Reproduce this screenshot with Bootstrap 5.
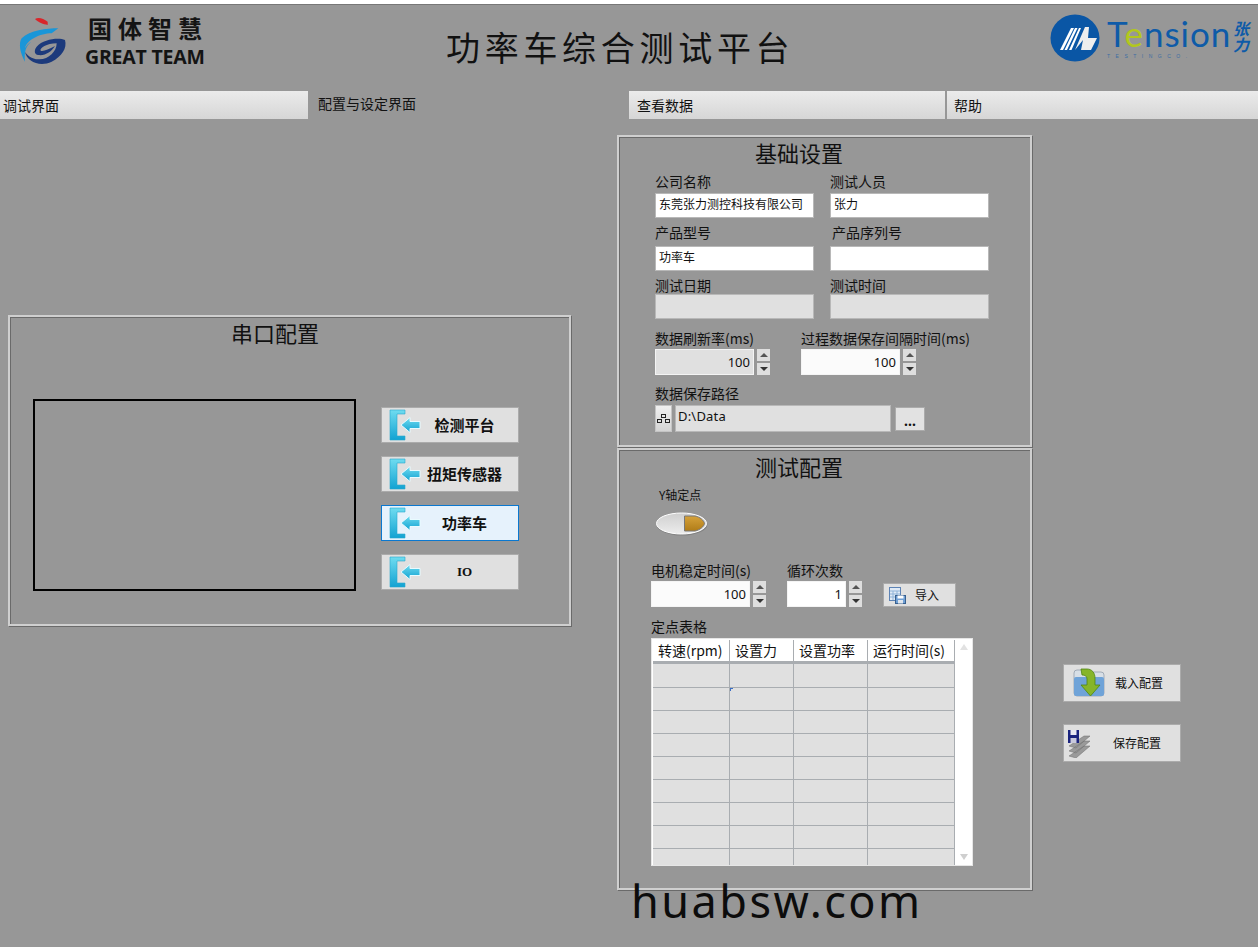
<!DOCTYPE html>
<html lang="zh"><head><meta charset="utf-8"><title>功率车综合测试平台</title>
<link href="https://cdn.jsdelivr.net/npm/bootstrap@5.3.0/dist/css/bootstrap.min.css" rel="stylesheet">
<style>
html,body{margin:0;height:947px;overflow:hidden}
body{background:#979797;color:#111;font-family:"Noto Sans","Noto Sans CJK SC",sans-serif;font-size:14px;position:relative}
.top-strip{height:5px;background:#fff;border-bottom:1px solid #777}
.head-bar{height:86px;position:relative}
.g-logo{margin:5px 5px 0 10px;flex:none}
.g-text{padding-top:10px;flex:none;width:380px}
.g-cn{font-size:24px;font-weight:700;letter-spacing:6px;line-height:26px;height:28px;padding-top:2px;margin-left:3px;color:#141414;font-family:"Liberation Sans","Noto Sans CJK SC",sans-serif}
.g-en{font-size:19.5px;font-weight:700;line-height:28px;color:#141414;font-family:"Open Sans",sans-serif;letter-spacing:-.2px}
.app-title{font-family:"Noto Sans CJK SC",serif;font-size:34px;font-weight:400;letter-spacing:4.7px;line-height:40px;margin:22px 0 0 -19px;flex:none;width:400px;white-space:nowrap}
.t-logo{margin:9px 0 0 204px;flex:none}
.t-word{position:relative;margin-left:6px;width:125px;flex:none}
.t-name{font-family:"Lato",sans-serif;font-size:35px;line-height:40px;color:#0e5ba8;letter-spacing:1px;margin-top:8px;white-space:nowrap}
.t-name span{color:#b2c71d}
.t-sub{font-size:5px;line-height:6px;color:#3d6ea3;letter-spacing:5.5px;white-space:nowrap;font-family:"Liberation Sans",sans-serif}
.t-cn{writing-mode:vertical-rl;font-family:"Noto Sans CJK SC",sans-serif;font-weight:700;font-style:italic;font-size:16px;line-height:18px;color:#0e5ba8;margin-top:16px;flex:none}
.tab-row{height:28px}
.tab-item{background:linear-gradient(#ebebeb,#d6d6d6);line-height:28px;flex:none;white-space:nowrap;padding-top:1px}
.tab-a{width:308px;padding-left:3px}
.tab-b{width:321px;padding-left:10px;background:none;line-height:26px;padding-top:0}
.tab-c{width:316px;padding-left:8px}
.tab-d{flex:1 1 auto;margin-left:2px;padding-left:7px}
.main-grid{display:grid;grid-template-columns:617px 415px 1fr}
.col-left{padding:197px 0 0 8px}
.col-mid{padding-top:16px}
.col-right{padding:545px 0 0 31px}
.frame-box{border:2px solid #cfcfcf;box-shadow:inset 1px 1px 0 #6a6a6a,1px 1px 0 #6a6a6a}
.frame-com{width:563px;height:311px;margin-top:-1px}
.frame-a{height:312px}
.frame-b{height:442px;margin-top:1px}
.frame-title{font-family:"Noto Sans CJK SC",sans-serif;font-size:22px;line-height:30px;height:37px;white-space:nowrap}
.frame-b .frame-title{line-height:33px}
.frame-a .frame-title,.frame-b .frame-title{padding-left:136px}
.frame-com .frame-title{padding-left:221px}
.com-body{padding:45px 0 0 23px;gap:25px}
.com-canvas{width:323px;height:192px;border:2px solid #000;flex:none}
.com-btns{margin-top:8px;gap:13px;width:138px}
.lv-btn{--bs-btn-padding-x:0;--bs-btn-padding-y:0;--bs-btn-border-radius:0;--bs-btn-border-width:1px;background:#e0e0e0;border-color:#ababab;color:#111;display:flex;align-items:center;position:relative;font-family:"Noto Sans CJK SC",sans-serif;white-space:nowrap}
.com-btn{width:138px;height:36px;font-weight:700;font-size:15px;padding-left:7px}
.com-btn span{flex:1;text-align:center;padding-right:10px}
.com-on{background:#e6f2fc;border-color:#0a78d0}
.ser-txt{font-family:"Liberation Serif",serif;font-size:13px}
.a-body{padding-left:36px}
.label-line{line-height:15px;height:19px;white-space:nowrap;font-family:"Noto Sans CJK SC","Noto Sans",sans-serif}
.lbl-r2{line-height:11px}
.lbl-r3{line-height:21px}
.lbl-r4{line-height:17px}
.lbl-r5{line-height:15px}
.lbl-b{line-height:17px}
.pair{gap:16px}
.cell-w{width:159px}
.lv-input{--bs-border-radius:0;border-radius:0;border:1px solid #b8b8b8;padding:0 3px;font-size:12px;line-height:20px;height:25px;background:#fff;color:#111;min-height:0;font-family:"Noto Sans CJK SC",sans-serif;white-space:nowrap;overflow:hidden}
.lv-off{background:#e0e0e0}
.gap-r2{margin-top:9px}
.gap-r3{margin-top:4px}
.gap-r4{margin-top:11px}
.gap-r5{margin-top:11px}
.shift-l{padding-left:2px}
.spin-wrap{gap:3px}
.spin-num{height:26px;text-align:right;font-size:13px;line-height:24px;padding-right:3px;font-family:"Noto Sans",sans-serif;border-color:#f4f4f4}
.w-98{width:99px}
.w-58{width:59px}
.spin-bg{background:#fbfbfb}
.spin-pair{gap:31px}
.arrow-stack{width:13px;gap:2px;flex:none}
.arrow-btn{height:12px;background:#dedede;display:flex;align-items:center;justify-content:center}
.tri-up{width:0;height:0;border:4px solid transparent;border-top:0;border-bottom:4px solid #555}
.tri-dn{width:0;height:0;border:4px solid transparent;border-bottom:0;border-top:4px solid #333}
.path-ico{width:17px;height:27px;background:linear-gradient(#f0f0f0,#d4d4d4);border:1px solid #c4c4c4;display:flex;align-items:center;justify-content:center;flex:none}
.path-val{width:216px;height:27px;margin-left:3px;font-size:13px;font-family:"Noto Sans",sans-serif;line-height:20px;background:#e0e0e0;padding-left:2px;letter-spacing:.2px}
.dots-btn{width:30px;height:24px;margin:2px 0 0 4px;justify-content:center;align-items:flex-end;font-size:14px;line-height:18px;background:#e2e2e2;font-family:"Noto Sans",sans-serif;font-weight:700}
.b-body{padding-left:32px}
.y-label{font-size:12px;height:16px;line-height:16px;padding-left:8px}
.y-sw{margin:9px 0 0 4px;display:block}
.b-row2{margin-top:26px}
.b-gap{gap:21px}
.import-btn{width:73px;height:24px;margin:21px 0 0 0;font-size:12px;padding-left:5px}
.import-btn span{margin-left:9px}
.tbl-label{margin-top:11px;line-height:16px;height:18px;margin-bottom:2px;font-family:"Noto Sans CJK SC",sans-serif}
.tbl-wrap{width:322px;height:228px;background:#fff;border:1px solid #e6e6e6;padding:1px 0 0 1px;overflow:hidden}
.tbl-inner{width:302px;height:225px;overflow:hidden;flex:none}
.lv-table{border-collapse:separate;border-spacing:0;table-layout:fixed;width:302px;margin:0;color:#111}
.lv-table th{height:23px;padding:0 0 0 5px;vertical-align:top;font-weight:400;background:#fff;border-right:1px solid #a9adb1;border-bottom:2px solid #a9adb1;font-size:14px;line-height:20px;white-space:nowrap;overflow:hidden;font-family:"Noto Sans CJK SC","Noto Sans",sans-serif}
.lv-table td{height:23px;padding:0;background:#e0e0e0;border-right:1px solid #a9adb1;border-bottom:1px solid #a9adb1;position:relative}
.lv-table tr.first-row td{border-top:1px solid #a9adb1;height:25px}
.w-c1{width:77px}.w-c2{width:64px}.w-c3{width:74px}.w-c4{width:87px}
.corner-tick{position:absolute;left:0;top:0;width:3px;height:3px;border-left:1px solid #3c6fc4;border-top:1px solid #3c6fc4}
.tbl-scroll{flex:1 1 auto;padding:4px 0 5px 0}
.tri-sm-up{width:0;height:0;border:4px solid transparent;border-top:0;border-bottom:6px solid #e2e2e2}
.tri-sm-dn{width:0;height:0;border:4px solid transparent;border-bottom:0;border-top:6px solid #cfcfcf}
.side-btn{width:118px;height:38px;font-size:12px}
.side-1{padding-left:9px}
.side-1 span{margin-left:10px}
.side-2{margin-top:22px;padding-left:2px}
.side-2 span{margin-left:21px}
.water-mark{position:absolute;left:631px;top:870px;font-family:"Noto Sans",sans-serif;font-size:45px;line-height:62px;letter-spacing:2.5px;color:#0c0c0c}
</style></head><body>
<svg width="0" height="0" class="position-absolute"><defs>
<linearGradient id="dg" x1="0" y1="0" x2="0" y2="1"><stop offset="0" stop-color="#6fdcf0"/><stop offset="1" stop-color="#12a2d2"/></linearGradient>
<symbol id="door" viewBox="0 0 32 32"><path d="M1 1H16V5H8V27H16V31H1Z" fill="url(#dg)" stroke="#2aa7cf" stroke-width=".6"/><path d="M12 16L21 8.500V12.500H31V19.500H21V23.500Z" fill="url(#dg)" stroke="#e8fbff" stroke-width="1"/></symbol>
</defs></svg>
<div class="top-strip"></div>
<div class="head-bar d-flex">
  <svg class="g-logo" width="70" height="60" viewBox="0 0 210 180"><path d="M75 27C85 20 100 25 113 35L113 45C100 42 85 38 75 27Z" fill="#d9252a"/><path d="M145 55C110 55 60 60 35 85C25 100 30 130 45 155C42 125 48 105 65 95C55 100 50 105 45 115C50 90 90 70 125 70Z" fill="#1a96d8"/><path d="M45 125C50 155 90 172 125 155C155 140 172 115 165 90C145 82 100 88 80 110C72 120 72 133 85 135C105 138 125 125 135 108C115 118 100 125 92 122C88 115 110 100 140 100C140 125 115 150 85 148C65 147 50 135 45 125Z" fill="#1c3a7c"/></svg>
  <div class="g-text"><div class="g-cn">国体智慧</div><div class="g-en">GREAT TEAM</div></div>
  <div class="app-title">功率车综合测试平台</div>
  <svg class="t-logo" width="51" height="48" viewBox="0 0 51 48"><ellipse cx="25" cy="24" rx="24.500" ry="23.500" fill="#0a56a5"/><path d="M10 36L21 14H24L13 36ZM14.500 36L25 14H27.500L17 36ZM19 36L29 14H31L21.500 36Z" fill="#fff"/><path d="M25 36L35 13H39L38 24H47L41 36H31L33 26Z" fill="#eee"/></svg>
  <div class="t-word"><div class="t-name">T<span>e</span>nsion</div><div class="t-sub">TESTINGCO.</div></div>
  <div class="t-cn">张力</div>
</div>
<div class="tab-row d-flex">
  <div class="tab-item tab-a">调试界面</div>
  <div class="tab-item tab-b">配置与设定界面</div>
  <div class="tab-item tab-c">查看数据</div>
  <div class="tab-item tab-d">帮助</div>
</div>
<div class="main-grid">
  <div class="col-left">
    <div class="frame-box frame-com">
      <div class="frame-title">串口配置</div>
      <div class="com-body d-flex">
        <div class="com-canvas"></div>
        <div class="com-btns d-flex flex-column">
          <button class="btn lv-btn com-btn"><svg width="32" height="32"><use href="#door"/></svg><span>检测平台</span></button>
          <button class="btn lv-btn com-btn"><svg width="32" height="32"><use href="#door"/></svg><span>扭矩传感器</span></button>
          <button class="btn lv-btn com-btn com-on"><svg width="32" height="32"><use href="#door"/></svg><span>功率车</span></button>
          <button class="btn lv-btn com-btn"><svg width="32" height="32"><use href="#door"/></svg><span class="ser-txt">IO</span></button>
        </div>
      </div>
    </div>
  </div>
  <div class="col-mid">
    <div class="frame-box frame-a">
      <div class="frame-title">基础设置</div>
      <div class="a-body">
        <div class="pair d-flex">
          <div class="cell-w"><div class="label-line">公司名称</div><div class="form-control lv-input">东莞张力测控科技有限公司</div></div>
          <div class="cell-w"><div class="label-line">测试人员</div><div class="form-control lv-input">张力</div></div>
        </div>
        <div class="pair d-flex gap-r2">
          <div class="cell-w"><div class="label-line lbl-r2">产品型号</div><div class="form-control lv-input">功率车</div></div>
          <div class="cell-w"><div class="label-line lbl-r2 shift-l">产品序列号</div><div class="form-control lv-input"></div></div>
        </div>
        <div class="pair d-flex gap-r3">
          <div class="cell-w"><div class="label-line lbl-r3">测试日期</div><div class="form-control lv-input lv-off"></div></div>
          <div class="cell-w"><div class="label-line lbl-r3">测试时间</div><div class="form-control lv-input lv-off"></div></div>
        </div>
        <div class="spin-pair d-flex gap-r4">
          <div><div class="label-line lbl-r4">数据刷新率(ms)</div><div class="spin-wrap d-flex"><div class="form-control lv-input spin-num w-98 lv-off">100</div><div class="arrow-stack d-flex flex-column"><div class="arrow-btn"><div class="tri-up"></div></div><div class="arrow-btn"><div class="tri-dn"></div></div></div></div></div>
          <div><div class="label-line lbl-r4">过程数据保存间隔时间(ms)</div><div class="spin-wrap d-flex"><div class="form-control lv-input spin-num w-98 spin-bg">100</div><div class="arrow-stack d-flex flex-column"><div class="arrow-btn"><div class="tri-up"></div></div><div class="arrow-btn"><div class="tri-dn"></div></div></div></div></div>
        </div>
        <div class="gap-r5">
          <div class="label-line lbl-r5">数据保存路径</div>
          <div class="d-flex">
            <div class="path-ico"><svg width="13" height="11" viewBox="0 0 13 11" fill="none" stroke="#222"><rect x="4.500" y="1.500" width="4" height="3"/><rect x=".5" y="6.500" width="4" height="3"/><rect x="8.500" y="6.500" width="4" height="3"/></svg></div>
            <div class="form-control lv-input path-val">D:\Data</div>
            <button class="btn lv-btn dots-btn">...</button>
          </div>
        </div>
      </div>
    </div>
    <div class="frame-box frame-b">
      <div class="frame-title">测试配置</div>
      <div class="b-body">
        <div class="y-label label-line">Y轴定点</div>
        <svg class="y-sw" width="54" height="24" viewBox="0 0 54 24"><defs><linearGradient id="sw" x1="0" y1="0" x2="0" y2="1"><stop offset="0" stop-color="#cfcfcf"/><stop offset="1" stop-color="#ececec"/></linearGradient><linearGradient id="am" x1="0" y1="0" x2="0" y2="1"><stop offset="0" stop-color="#d6a23a"/><stop offset="1" stop-color="#b07c18"/></linearGradient></defs><ellipse cx="27" cy="12.500" rx="25.500" ry="11" fill="#707070" opacity=".5"/><ellipse cx="26.500" cy="11.500" rx="25" ry="10.500" fill="url(#sw)" stroke="#fff"/><path d="M29.500 4H40C45 5 49 8.500 49.500 11.500C49 14.500 45 18 40 19H29.500Z" fill="url(#am)" stroke="#777"/></svg>
        <div class="b-row2 b-gap d-flex">
          <div><div class="label-line lbl-b">电机稳定时间(s)</div><div class="spin-wrap d-flex"><div class="form-control lv-input spin-num w-98 spin-bg">100</div><div class="arrow-stack d-flex flex-column"><div class="arrow-btn"><div class="tri-up"></div></div><div class="arrow-btn"><div class="tri-dn"></div></div></div></div></div>
          <div><div class="label-line lbl-b">循环次数</div><div class="spin-wrap d-flex"><div class="form-control lv-input spin-num w-58">1</div><div class="arrow-stack d-flex flex-column"><div class="arrow-btn"><div class="tri-up"></div></div><div class="arrow-btn"><div class="tri-dn"></div></div></div></div></div>
          <button class="btn lv-btn import-btn align-self-start"><svg width="17" height="17" viewBox="0 0 17 17"><rect x=".5" y=".5" width="11" height="13" fill="#dfeaf6" stroke="#5d83b5"/><path d="M1 4H11M1 7H11M1 10H11M4 4V13M8 4V13" stroke="#8fb3d8"/><rect x="6.500" y="8.500" width="10" height="8" fill="#6f9fd4" stroke="#38608f"/><rect x="8.500" y="8.500" width="6" height="3" fill="#fff"/><rect x="9" y="13" width="5" height="3.500" fill="#dfe6ee"/></svg><span>导入</span></button>
        </div>
        <div class="tbl-label">定点表格</div>
        <div class="tbl-wrap d-flex">
          <div class="tbl-inner">
            <table class="lv-table">
              <colgroup><col class="w-c1"><col class="w-c2"><col class="w-c3"><col class="w-c4"></colgroup>
              <thead><tr><th>转速(rpm)</th><th>设置力</th><th>设置功率</th><th>运行时间(s)</th></tr></thead>
              <tbody>
                <tr class="first-row"><td></td><td></td><td></td><td></td></tr>
                <tr><td></td><td><i class="corner-tick"></i></td><td></td><td></td></tr>
                <tr><td></td><td></td><td></td><td></td></tr>
                <tr><td></td><td></td><td></td><td></td></tr>
                <tr><td></td><td></td><td></td><td></td></tr>
                <tr><td></td><td></td><td></td><td></td></tr>
                <tr><td></td><td></td><td></td><td></td></tr>
                <tr><td></td><td></td><td></td><td></td></tr>
                <tr><td></td><td></td><td></td><td></td></tr>
              </tbody>
            </table>
          </div>
          <div class="tbl-scroll d-flex flex-column justify-content-between align-items-center"><div class="tri-sm-up"></div><div class="tri-sm-dn"></div></div>
        </div>
      </div>
    </div>
  </div>
  <div class="col-right">
    <button class="btn lv-btn side-btn side-1"><svg width="32" height="32" viewBox="0 0 32 32"><path d="M1 6Q1 3 4 3H12L14 5H28Q31 5 31 8V26Q31 29 28 29H4Q1 29 1 26Z" fill="#d8dfe6" stroke="#8a97a5" stroke-width=".7"/><rect x="1" y="10" width="30" height="19" rx="2" fill="#6fa3d8"/><path d="M8 2H14C19 2 22 6 22 11V18H27L17.500 29L8 18H14V12C14 9 12 8 9 8Z" fill="#86b52a" stroke="#4f8512" stroke-width=".8"/></svg><span>载入配置</span></button>
    <button class="btn lv-btn side-btn side-2"><svg width="26" height="30" viewBox="0 0 26 30"><path d="M3 18L18 8L24 8L10 20ZM3 23L18 13L24 13L10 25ZM3 28L18 18L24 18L10 30Z" fill="#9a9a9a" stroke="#6d6d6d" stroke-width=".5"/><rect x="2" y="2" width="11" height="13" fill="#1a237e"/><rect x="4.500" y="2" width="6" height="5" fill="#e8e8f2"/><rect x="4.500" y="10" width="6" height="5" fill="#c9c9dc"/></svg><span>保存配置</span></button>
  </div>
</div>
<div class="water-mark">huabsw.com</div>
</body></html>
